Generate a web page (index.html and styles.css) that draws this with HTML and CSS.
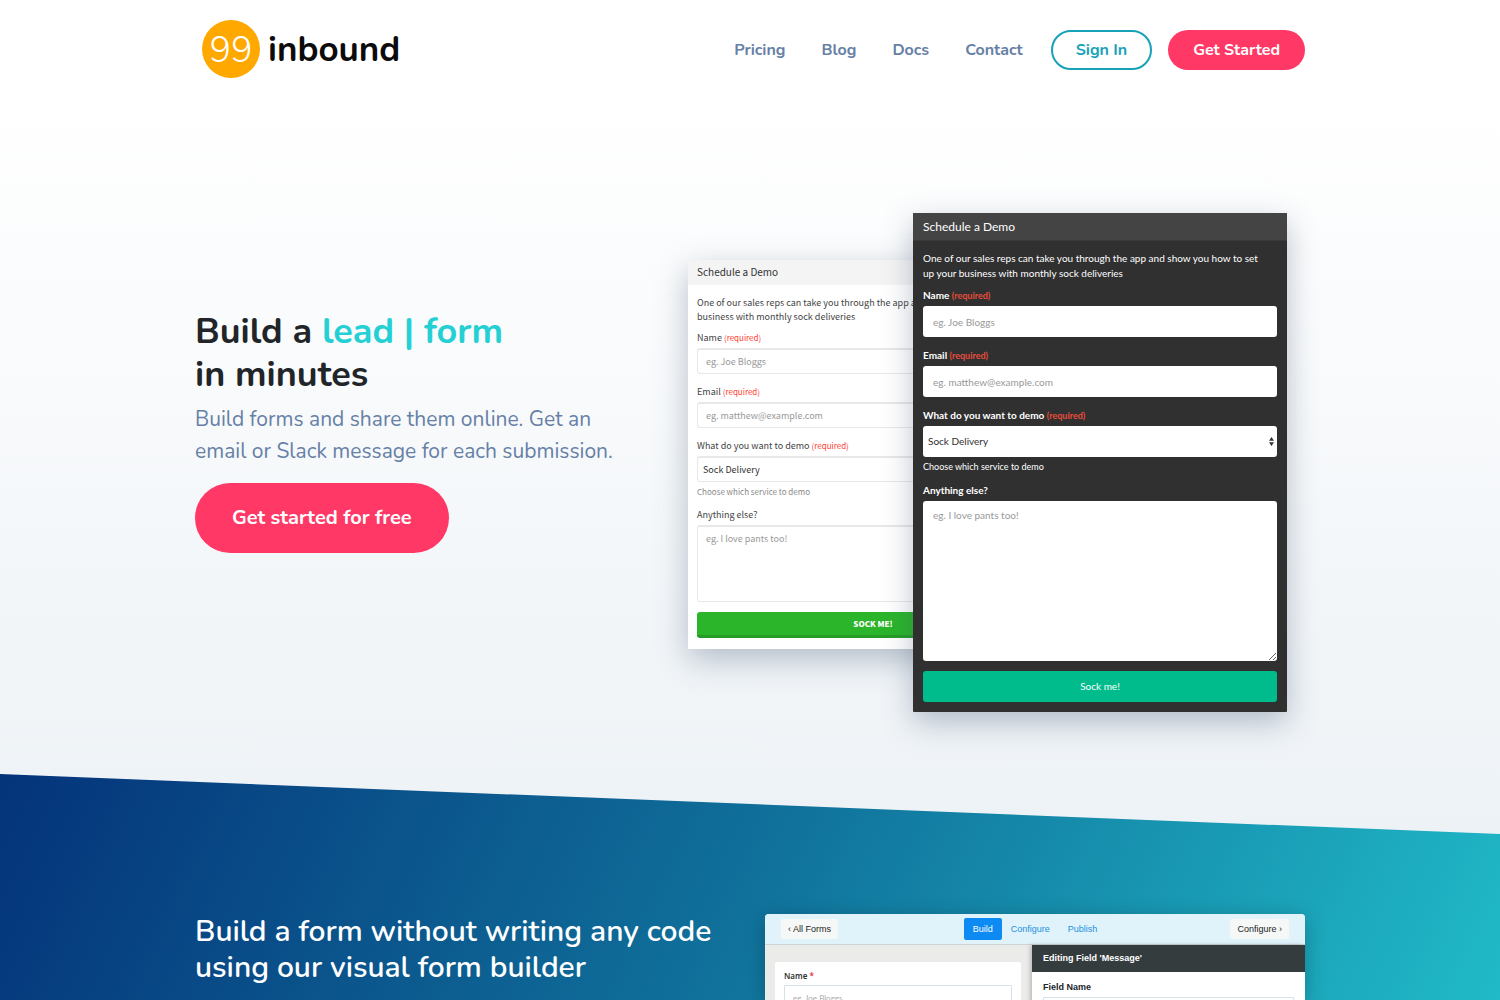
FILE: index.html
```html
<!DOCTYPE html>
<html lang="en">
<head>
<meta charset="utf-8">
<meta name="viewport" content="width=device-width, initial-scale=1">
<title>99inbound</title>
<link rel="stylesheet" href="styles.css">
</head>
<body>
<div class="top">
  <header class="container header">
    <a class="logo" href="#"><span class="logo-mark">99</span><span class="logo-name">inbound</span></a>
    <nav class="nav">
      <a href="#">Pricing</a>
      <a href="#">Blog</a>
      <a href="#">Docs</a>
      <a href="#">Contact</a>
      <a class="pill pill-outline" href="#">Sign In</a>
      <a class="pill pill-solid" href="#">Get Started</a>
    </nav>
  </header>
  <main class="container hero">
    <div class="hero-text">
      <h1>Build a <span class="accent">lead | form</span><br>in minutes</h1>
      <p>Build forms and share them online. Get an email or Slack message for each submission.</p>
      <a class="cta" href="#">Get started for free</a>
    </div>
    <div class="forms">
      <form class="card light">
        <h2>Schedule a Demo</h2>
        <div class="card-body">
          <p>One of our sales reps can take you through the app and show you how to set up your business with monthly sock deliveries</p>
          <div class="field"><label for="l-name">Name <span>(required)</span></label><input id="l-name" type="text" placeholder="eg. Joe Bloggs"></div>
          <div class="field"><label for="l-email">Email <span>(required)</span></label><input id="l-email" type="email" placeholder="eg. matthew@example.com"></div>
          <div class="field"><label for="l-demo">What do you want to demo <span>(required)</span></label><select id="l-demo"><option>Sock Delivery</option></select><small>Choose which service to demo</small></div>
          <div class="field"><label for="l-else">Anything else?</label><textarea id="l-else" placeholder="eg. I love pants too!"></textarea></div>
          <button type="button">SOCK ME!</button>
        </div>
      </form>
      <form class="card dark">
        <h2>Schedule a Demo</h2>
        <div class="card-body">
          <p>One of our sales reps can take you through the app and show you how to set up your business with monthly sock deliveries</p>
          <div class="field"><label for="d-name">Name <span>(required)</span></label><input id="d-name" type="text" placeholder="eg. Joe Bloggs"></div>
          <div class="field"><label for="d-email">Email <span>(required)</span></label><input id="d-email" type="email" placeholder="eg. matthew@example.com"></div>
          <div class="field"><label for="d-demo">What do you want to demo <span>(required)</span></label>
            <div class="select-wrap"><select id="d-demo"><option>Sock Delivery</option></select><svg class="arrows" width="5" height="9" viewBox="0 0 5 9" aria-hidden="true"><path d="M0 3.7 2.5 0 5 3.7zM0 5.3h5L2.5 9z" fill="#333"/></svg></div>
            <small>Choose which service to demo</small></div>
          <div class="field"><label for="d-else">Anything else?</label><textarea id="d-else" placeholder="eg. I love pants too!"></textarea></div>
          <button type="button">Sock me!</button>
        </div>
      </form>
    </div>
  </main>
</div>
<section class="builder">
  <div class="container builder-row">
    <h2>Build a form without writing any code using our visual form builder</h2>
    <div class="preview">
      <div class="bar">
        <button class="chip" type="button">‹ All Forms</button>
        <div class="tabs">
          <a class="tab active" href="#">Build</a>
          <a class="tab" href="#">Configure</a>
          <a class="tab" href="#">Publish</a>
        </div>
        <button class="chip" type="button">Configure ›</button>
      </div>
      <div class="panes">
        <div class="canvas">
          <div class="sheet">
            <label for="p-name">Name <span>*</span></label>
            <input id="p-name" type="text" placeholder="eg. Joe Bloggs">
          </div>
        </div>
        <div class="editor">
          <h3>Editing Field 'Message'</h3>
          <div class="editor-body">
            <label for="p-field">Field Name</label>
            <input id="p-field" type="text">
          </div>
        </div>
      </div>
    </div>
  </div>
</section>
</body>
</html>
```
FILE: styles.css
```css
* { box-sizing: border-box; }
body {
  margin: 0;
  min-height: 100vh;
  display: flex;
  flex-direction: column;
  font-family: Nunito, "Noto Sans", "Open Sans", sans-serif;
  color: #212529;
}
h1, h2, h3, p { margin: 0; }
a { text-decoration: none; }
input, select, textarea, button { font: inherit; margin: 0; }
.container { width: 100%; max-width: 1140px; margin: 0 auto; padding: 0 15px; }

.top { background: linear-gradient(#fff 100px, #edf2f6); }
.header { display: flex; justify-content: space-between; align-items: center; height: 100px; }
.logo { display: flex; align-items: center; gap: 8px; padding-left: 7px; margin-bottom: 2px; color: #0b0b0b; }
.logo-mark {
  width: 58px; height: 58px; border-radius: 50%;
  background: #ffa800; color: #fff;
  font-size: 36px; font-weight: 300; line-height: 62px; text-align: center;
}
.logo-name { padding-top: 2px; font-size: 35px; font-weight: 700; line-height: 56px; }
.nav { display: flex; align-items: center; font-size: 16px; font-weight: 700; line-height: 24px; }
.nav a { color: #6680a6; margin-left: 36px; }
.nav .pill { padding: 8px 25px; border-radius: 20px; }
.nav .pill-outline { margin-left: 28px; padding: 6px 23px; border: 2px solid #17a2b8; color: #17a2b8; }
.nav .pill-solid { margin-left: 16px; background: #ff3866; color: #fff; }

.hero { display: flex; justify-content: space-between; align-items: center; padding-top: 113px; padding-bottom: 121px; }
.hero-text { width: 440px; padding-bottom: 62px; }
h1 { font-size: 36px; font-weight: 700; line-height: 43px; }
.accent { color: #24d0d4; }
.hero-text p { margin: 7px 0 16px; font-size: 21px; font-weight: 400; line-height: 32px; color: #6680a6; }
.cta {
  display: inline-block; padding: 20px 37px; border-radius: 35px;
  background: #ff3866; color: #fff; font-size: 20px; font-weight: 700; line-height: 30px;
}

.forms { display: flex; align-items: center; padding-right: 18px; }
.card { flex: none; box-shadow: 0 10px 30px rgba(60, 80, 110, .35); }
.card label, .card small { display: block; }
.card label span { line-height: 1; }
.card input, .card select, .card textarea { display: block; width: 100%; appearance: none; background: #fff; outline: 0; }
.card textarea { resize: none; overflow: hidden; }
.card ::placeholder { color: #999; opacity: 1; }
.card button { display: block; width: 100%; color: #fff; border: 0; }

.light { width: 370px; margin-bottom: 16px; background: #fff; color: #444; font: 9px/14px "Noto Sans CJK SC", sans-serif; }
.light h2 { padding: 0 9px 2px; background: #f4f4f4; font-size: 10px; font-weight: 400; line-height: 23px; color: #333; }
.light .card-body { padding: 11px 9px; }
.light p { margin-bottom: 7px; }
.light .field { margin-bottom: 11px; }
.light .field:nth-last-child(2) { margin-bottom: 10px; }
.light label { margin-bottom: 3px; }
.light label span { color: #ff3b30; font-size: 8px; }
.light input, .light select { height: 26px; padding: 0 8px; border: 1px solid #e8e8e8; border-top-width: 2px; border-radius: 3px; }
.light select { padding: 0 5px; color: #333; }
.light small { margin: 3px 0 -2px; font-size: 8px; color: #888; }
.light textarea { height: 77px; padding: 5px 8px; border: 1px solid #e8e8e8; border-top-width: 2px; border-radius: 3px; }
.light button { height: 26px; border-radius: 3px; background: #2ab52a; border-bottom: 3px solid #259c25; font-size: 8px; font-weight: 900; }

.dark { width: 374px; margin-left: -145px; z-index: 1; background: #303030; color: #fff; border-radius: 1px; font: 10px/15px Lato, sans-serif; }
.dark h2 { padding: 0 10px; background: #444; border-bottom: 1px solid #3a3a3a; font-size: 12px; font-weight: 400; line-height: 27px; }
.dark .card-body { padding: 10px; }
.dark p { margin-bottom: 7px; padding-right: 8px; }
.dark .field { margin-bottom: 11px; }
.dark .field:nth-last-child(2) { margin-bottom: 10px; }
.dark label { margin-bottom: 3px; font-weight: 700; }
.dark label span { color: #e74c3c; font-size: 9px; }
.dark input, .dark select { height: 31px; padding: 0 10px; border: 0; border-radius: 3px; }
.dark select { padding: 0 5px; color: #303030; }
.select-wrap { display: grid; align-items: center; }
.select-wrap > * { grid-area: 1 / 1; }
.arrows { justify-self: end; margin-right: 3px; }
.dark small { margin: 2px 0 -2px; font-size: 9px; }
.dark textarea { height: 160px; padding: 7px 10px; border: 0; border-radius: 3px; resize: vertical; }
.dark button { height: 31px; border-radius: 3px; background: #00bc8c; }

.builder {
  flex: 1;
  margin-top: -60px;
  padding-top: 140px;
  background: linear-gradient(115deg, #04337a, #10719b 50%, #20bac8);
  clip-path: polygon(0 0, 100% 60px, 100% 100%, 0 100%);
}
.builder-row { display: grid; grid-template-columns: 1fr 1fr; gap: 30px; }
.builder h2 { color: #fff; font-size: 30px; font-weight: 600; line-height: 36px; }
.preview { height: 86px; overflow: hidden; border-radius: 4px 4px 0 0; background: #ebebea; font: 9px/14px "Liberation Sans", sans-serif; box-shadow: 0 4px 20px rgba(0, 0, 0, .25); }
.hero { padding-bottom: 122px; }
.bar { display: grid; grid-template-columns: 1fr auto 1fr; align-items: center; height: 31px; padding: 0 16px; background: #e0f3fa; border-bottom: 1px solid #ccd4d8; }
.chip { justify-self: start; padding: 3px 7px; border: 0; border-radius: 2px; background: #f5f8f7; color: #222; }
.chip:last-child { justify-self: end; }
.tabs { display: flex; }
.tab { padding: 4px 9px; border-radius: 2px; color: #2090e0; }
.tab.active { background: #0d8bf2; color: #fff; }
.panes { display: grid; grid-template-columns: 267px 1fr; }
.canvas { padding: 17px 11px 0 10px; }
.sheet { padding: 7px 9px; background: #fff; border-radius: 2px; }
.sheet label { display: block; margin-bottom: 2px; font: 600 8px/14px "Noto Sans", sans-serif; color: #333; }
.sheet label span { color: #e03030; }
.preview input { display: block; width: 100%; height: 26px; padding: 0 8px; border: 1px solid #d5e3e8; border-radius: 1px; }
.sheet input { font: 8px/14px Lato, sans-serif; }
.sheet ::placeholder { color: #aaa; opacity: 1; }
.editor { background: #fff; box-shadow: -2px 0 4px rgba(0, 0, 0, .2); }
.editor h3 { padding: 0 11px; background: #353c3e; color: #fff; font-size: 9px; line-height: 27px; }
.editor-body { padding: 8px 11px; }
.editor label { display: block; margin-bottom: 3px; font-weight: 700; }
```
